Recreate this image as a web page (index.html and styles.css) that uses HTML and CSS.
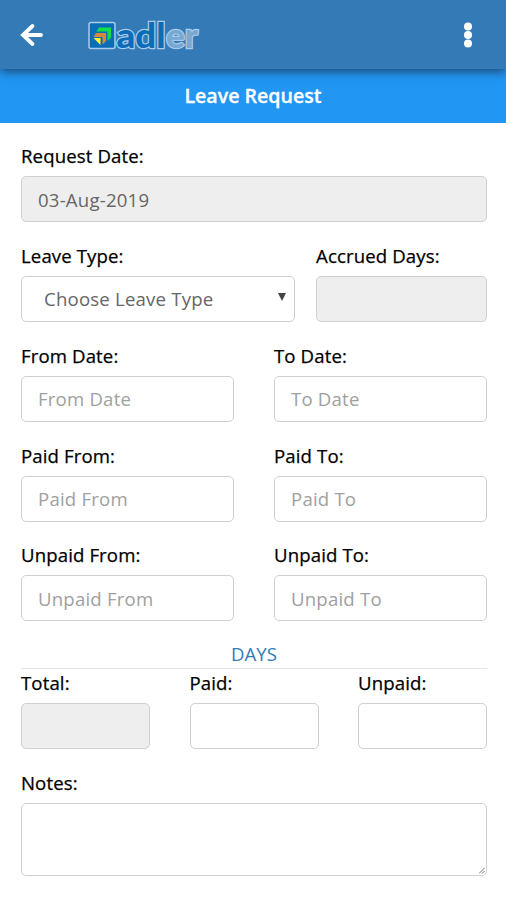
FILE: index.html
```
<!DOCTYPE html>
<html lang="en">
<head>
<meta charset="utf-8">
<title>Leave Request</title>
<link rel="stylesheet" href="styles.css">
</head>
<body>
<header class="topbar">
  <svg class="back" width="24" height="24" viewBox="0 0 24 24"><path d="M12.500 3 3 12l9.500 9M3.500 12H21" fill="none" stroke="#fff" stroke-width="3.800" stroke-linecap="round"/></svg>
  <svg class="logo" width="120" height="52" viewBox="0 -10 120 52">
    <rect x="3" y="4.500" width="26" height="26" rx="2" fill="#0b6db8" stroke="#a9cceb" stroke-width="1.500"/>
    <path d="M13 9.500h12v10l-3.500 3.500v-9.500H10.500z" fill="#10df45"/>
    <path d="M10 15h10v8l-3.500 3.500v-7.500H7.500z" fill="#d78a35"/>
    <path d="M7.500 20h7v7z" fill="#fff32b"/>
    <g class="wordmark">
      <text class="adl" x="30.500" y="30" textLength="49" lengthAdjust="spacingAndGlyphs">adl</text>
      <text class="er" x="80" y="30" textLength="32" lengthAdjust="spacingAndGlyphs">er</text>
    </g>
  </svg>
  <svg class="more" width="10" height="28" viewBox="0 0 10 28" fill="#fff"><circle cx="5" cy="5.500" r="4"/><circle cx="5" cy="14" r="4"/><circle cx="5" cy="22.500" r="4"/></svg>
</header>
<h1 class="title">Leave Request</h1>
<form class="form">
  <div class="row">
    <div class="group"><label>Request Date:</label><input class="field" value="03-Aug-2019" readonly></div>
  </div>
  <div class="row leave">
    <div class="group"><label>Leave Type:</label><div class="field select"><span>Choose Leave Type</span><i class="caret"></i></div></div>
    <div class="group"><label>Accrued Days:</label><input class="field" readonly></div>
  </div>
  <div class="row pair">
    <div class="group"><label>From Date:</label><input class="field" placeholder="From Date"></div>
    <div class="group"><label>To Date:</label><input class="field" placeholder="To Date"></div>
  </div>
  <div class="row pair">
    <div class="group"><label>Paid From:</label><input class="field" placeholder="Paid From"></div>
    <div class="group"><label>Paid To:</label><input class="field" placeholder="Paid To"></div>
  </div>
  <div class="row pair">
    <div class="group"><label>Unpaid From:</label><input class="field" placeholder="Unpaid From"></div>
    <div class="group"><label>Unpaid To:</label><input class="field" placeholder="Unpaid To"></div>
  </div>
  <h2 class="days">DAYS</h2>
  <div class="row triple">
    <div class="group"><label>Total:</label><input class="field" readonly></div>
    <div class="group"><label>Paid:</label><input class="field"></div>
    <div class="group"><label>Unpaid:</label><input class="field"></div>
  </div>
  <div class="group"><label>Notes:</label>
    <div class="field notes"><svg width="6" height="6" viewBox="0 0 6 6"><path d="M0 5.500 5.500 0M3 5.500 5.500 3" stroke="#777"/></svg></div>
  </div>
</form>
</body>
</html>
```
FILE: styles.css
```
* { box-sizing: border-box; }
body {
  margin: 0;
  height: 900px;
  overflow: hidden;
  background: #fff;
  color: #000;
  font: 18.6px/26px "Open Sans", sans-serif;
}
.topbar {
  position: relative;
  display: flex;
  align-items: center;
  height: 69px;
  padding: 0 33px 0 20px;
  background: #337ab7;
  box-shadow: 0 3px 9px rgba(30, 50, 80, .75);
}
.logo { margin: 0 0 1px 42px; }
.more { margin-left: auto; }
.wordmark {
  font: 900 35px Lato, sans-serif;
  stroke: #a9cceb;
  stroke-width: 2.4px;
  paint-order: stroke;
}
.adl { fill: #0b6db8; }
.er { fill: #78a9d3; }
.title {
  height: 54px;
  margin: 0;
  color: #fff;
  background: #2196f3;
  font-size: 19.6px;
  font-weight: 650;
  line-height: 54px;
  text-align: center;
  -webkit-text-stroke: .3px #fff;
}
.form { padding: 19px 19px 0 21px; }
.row { display: grid; margin-bottom: 19.87px; }
.leave { grid-template-columns: 274px 171px; justify-content: space-between; }
.pair { grid-template-columns: 213px 213px; justify-content: space-between; }
.triple { grid-template-columns: repeat(3, 129px); justify-content: space-between; }
.group { min-width: 0; }
label {
  display: block;
  height: 34px;
  line-height: 27px;
  letter-spacing: .12px;
  -webkit-text-stroke: .25px #000;
}
.field {
  display: block;
  width: 100%;
  height: 46px;
  margin: 0;
  padding: 0 16px;
  border: 1.5px solid #d0d0d0;
  border-radius: 5px;
  outline: 0;
  background: #fff;
  color: #666;
  font: 18.6px "Open Sans", sans-serif;
  letter-spacing: .2px;
}
.field::placeholder { color: #a0a0a0; opacity: 1; }
.field:read-only:is(input) { background: #eee; }
.select {
  display: flex;
  align-items: center;
  justify-content: space-between;
  padding: 0 8px 0 22px;
}
.caret {
  margin-bottom: 3px;
  border: 4.5px solid transparent;
  border-top: 8px solid #444;
  border-bottom: 0;
}
.days {
  height: 28px;
  margin: 0;
  border-bottom: 1px solid #e5e5e5;
  color: #337ab7;
  font-size: 18.6px;
  font-weight: 400;
  line-height: 26px;
  text-align: center;
}
.notes {
  display: flex;
  align-items: flex-end;
  justify-content: flex-end;
  height: 73px;
  padding: 1px;
}
```
